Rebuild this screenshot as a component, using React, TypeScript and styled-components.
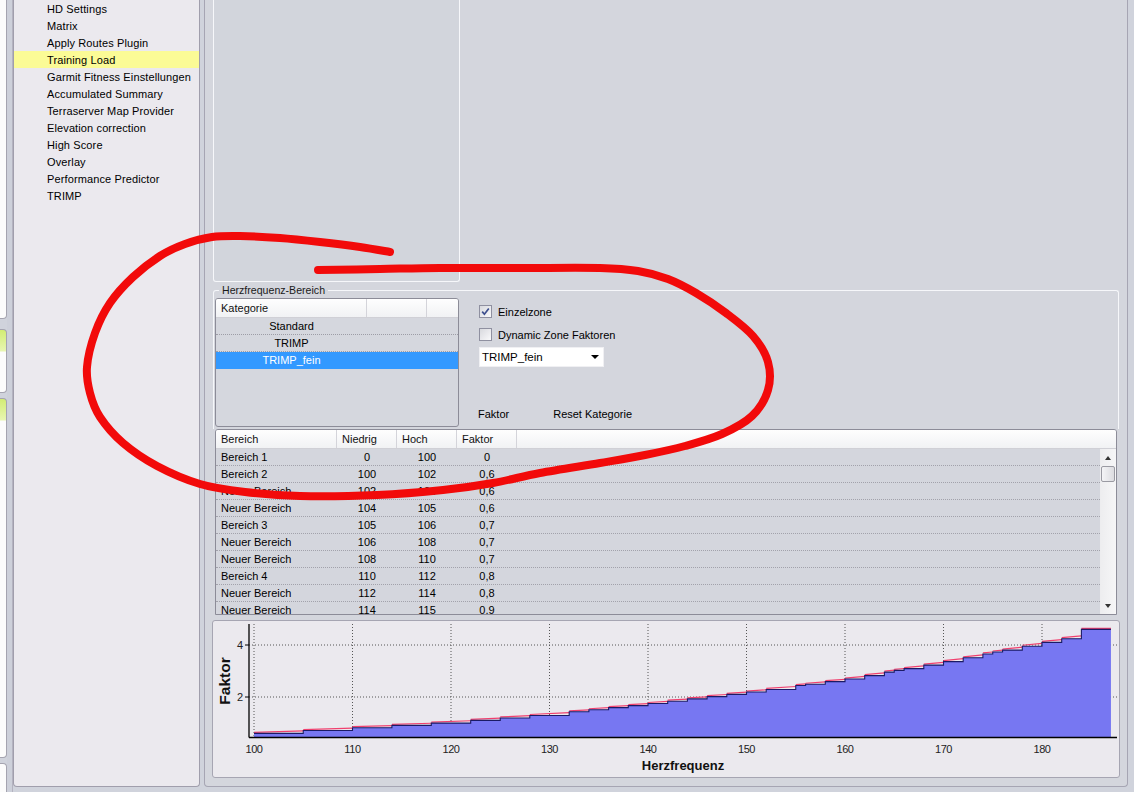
import React from 'react';
import styled, { createGlobalStyle } from 'styled-components';

const Global = createGlobalStyle`
  html, body { margin: 0; padding: 0; background: #d0d3dc; }
  body { font-family: "Liberation Sans", Arial, sans-serif; font-size: 11px; color: #000; }
  #root { width: 1134px; height: 792px; overflow: hidden; }
  * { box-sizing: border-box; }
`;

const Screen = styled.div`
  position: relative;
  width: 1134px;
  height: 792px;
  display: flex;
  align-items: flex-start;
  overflow: hidden;
  background: #d0d3dc;
`;

const LeftStrip = styled.div`
  width: 7px;
  flex: none;
  height: 792px;
  display: flex;
  flex-direction: column;
`;

const StripPanel = styled.div<{ $h: number; $mt: number; $green?: boolean }>`
  flex: none;
  height: ${p => p.$h}px;
  margin-top: ${p => p.$mt}px;
  background: ${p =>
    p.$green ? 'linear-gradient(#d2ec74 0px, #e8f6b2 21px, #fcfcfc 22px)' : '#fcfcfc'};
  border: 1px solid #a5a4b0;
  border-left: none;
  border-radius: 0 4px 4px 0;
`;

const Gutter = styled.div`
  width: 6px;
  flex: none;
  height: 792px;
  background: #cdd0da;
  border-right: 1px solid #b4b3c0;
`;

const Sidebar = styled.div`
  width: 187px;
  flex: none;
  height: 787px;
  background: #ebe9ee;
  border: 1px solid #a09eac;
  border-top: none;
  border-radius: 0 0 4px 4px;
  display: flex;
  flex-direction: column;
`;

const SideItem = styled.div<{ $active?: boolean }>`
  height: 17px;
  line-height: 18px;
  padding-left: 33px;
  white-space: nowrap;
  letter-spacing: 0.12px;
  background: ${p => (p.$active ? '#fbfb96' : 'transparent')};
`;

const Spacer = styled.div`
  width: 4px;
  flex: none;
`;

const Main = styled.div`
  width: 924px;
  flex: none;
  height: 787px;
  background: #d4d6dd;
  border: 1px solid #a6a5b3;
  border-top: none;
  border-radius: 0 0 4px 4px;
  display: flex;
  flex-direction: column;
`;

const TopRect = styled.div`
  margin-left: 8px;
  width: 247px;
  height: 282px;
  flex: none;
  background: #d2d5dc;
  border: 1px solid #f6f7fa;
  border-top: none;
  border-radius: 0 0 3px 3px;
`;

const Group = styled.div`
  position: relative;
  margin-top: 8px;
  margin-left: 8px;
  width: 906px;
  height: 139px;
  flex: none;
  border: 1px solid #f6f7fa;
  border-bottom: none;
  border-radius: 3px 3px 0 0;
  display: flex;
  padding: 7px 0 0 1px;
`;

const Legend = styled.span`
  position: absolute;
  top: -8px;
  left: 5px;
  padding: 0 3px;
  background: #d4d6dd;
  line-height: 14px;
  font-size: 10.6px;
  color: #1a1a1a;
`;

const KatList = styled.div`
  width: 244px;
  height: 129px;
  flex: none;
  border: 1px solid #8c8c98;
  border-radius: 3px;
  background: #d5d7de;
  overflow: hidden;
  display: flex;
  flex-direction: column;
`;

const HeadRow = styled.div`
  display: flex;
  height: 19px;
  flex: none;
  background: linear-gradient(#fefefe, #f1f2f4);
  border-bottom: 1px solid #d0d0d6;
`;

const HeadCell = styled.div<{ $w?: number }>`
  ${p => (p.$w ? `width: ${p.$w}px; flex: none;` : 'flex: 1;')}
  height: 18px;
  line-height: 18px;
  padding-left: 5px;
  border-right: 1px solid #d4d4da;
  white-space: nowrap;
  color: #111;
  &:last-child { border-right: none; }
`;

const KatRow = styled.div<{ $sel?: boolean }>`
  height: 17px;
  flex: none;
  display: flex;
  background: ${p => (p.$sel ? '#3399ff' : 'transparent')};
  color: ${p => (p.$sel ? '#fff' : '#000')};
  border-bottom: 1px dotted ${p => (p.$sel ? '#3399ff' : '#9d9da6')};
`;

const KatCell = styled.div`
  width: 151px;
  flex: none;
  text-align: center;
  line-height: 17px;
  white-space: nowrap;
`;

const Controls = styled.div`
  margin-left: 20px;
  display: flex;
  flex-direction: column;
  align-items: flex-start;
`;

const CheckRow = styled.div<{ $mt: number }>`
  display: flex;
  align-items: center;
  gap: 6px;
  height: 13px;
  margin-top: ${p => p.$mt}px;
  white-space: nowrap;
  line-height: 12px;
`;

const Box = styled.div`
  width: 13px;
  height: 13px;
  flex: none;
  border: 1px solid #8f90a0;
  background: linear-gradient(135deg, #d8d9de, #f9f9fb);
  display: flex;
  align-items: center;
  justify-content: center;
`;

const Combo = styled.div`
  margin-top: 6px;
  width: 125px;
  height: 20px;
  background: #fff;
  border: 1px solid #f0f0f3;
  display: flex;
  align-items: center;
  justify-content: space-between;
  padding: 0 4px 0 2px;
  font-size: 11.5px;
`;

const Arrow = styled.span`
  width: 0;
  height: 0;
  border-left: 4px solid transparent;
  border-right: 4px solid transparent;
  border-top: 4px solid #000;
`;

const LinkRow = styled.div`
  margin-top: 40px;
  margin-left: -1px;
  display: flex;
  gap: 44px;
  line-height: 14px;
  white-space: nowrap;
`;

const Table = styled.div`
  margin-left: 10px;
  width: 902px;
  height: 186px;
  flex: none;
  border: 1px solid #8c8c98;
  border-radius: 3px 3px 0 0;
  display: flex;
  flex-direction: column;
  overflow: hidden;
`;

const TBody = styled.div`
  flex: 1;
  display: flex;
  overflow: hidden;
`;

const Rows = styled.div`
  flex: 1;
  overflow: hidden;
`;

const TRow = styled.div`
  height: 17px;
  display: flex;
  border-bottom: 1px dotted #a2a2ab;
`;

const TCell = styled.div<{ $w: number; $center?: boolean }>`
  width: ${p => p.$w}px;
  flex: none;
  line-height: 17px;
  white-space: nowrap;
  ${p => (p.$center ? 'text-align: center;' : 'padding-left: 5px;')}
`;

const ScrollBar = styled.div`
  width: 16px;
  flex: none;
  background: linear-gradient(90deg, #ededef, #f6f6f7);
  display: flex;
  flex-direction: column;
  align-items: center;
`;

const ScrollArrow = styled.div<{ $up?: boolean }>`
  height: 17px;
  width: 16px;
  display: flex;
  align-items: center;
  justify-content: center;
  &::after {
    content: '';
    border-left: 3.5px solid transparent;
    border-right: 3.5px solid transparent;
    ${p => (p.$up ? 'border-bottom: 4px solid #333;' : 'border-top: 4px solid #333;')}
  }
`;

const Thumb = styled.div`
  width: 14px;
  height: 16px;
  border: 1px solid #9a9aa2;
  border-radius: 2px;
  background: linear-gradient(90deg, #f4f4f6, #dcdce0);
`;

const ScrollFill = styled.div`
  flex: 1;
`;

const ChartPanel = styled.div`
  margin-top: 5px;
  margin-left: 7px;
  width: 908px;
  height: 158px;
  flex: none;
  background: #ebe9ee;
  border: 1px solid #a6a5b2;
  border-radius: 3px;
  overflow: hidden;
`;

const Overlay = styled.svg`
  position: absolute;
  left: 0;
  top: 0;
  pointer-events: none;
`;

const sideItems = [
  'HD Settings',
  'Matrix',
  'Apply Routes Plugin',
  'Training Load',
  'Garmit Fitness Einstellungen',
  'Accumulated Summary',
  'Terraserver Map Provider',
  'Elevation correction',
  'High Score',
  'Overlay',
  'Performance Predictor',
  'TRIMP',
];

const rows: [string, string, string, string][] = [
  ['Bereich 1', '0', '100', '0'],
  ['Bereich 2', '100', '102', '0,6'],
  ['Neuer Bereich', '102', '104', '0,6'],
  ['Neuer Bereich', '104', '105', '0,6'],
  ['Bereich 3', '105', '106', '0,7'],
  ['Neuer Bereich', '106', '108', '0,7'],
  ['Neuer Bereich', '108', '110', '0,7'],
  ['Bereich 4', '110', '112', '0,8'],
  ['Neuer Bereich', '112', '114', '0,8'],
  ['Neuer Bereich', '114', '115', '0,9'],
  ['Neuer Bereich', '115', '118', '0,9'],
];

const anchors: [number, number][] = [
  [100, 0.6], [110, 0.82], [120, 1.04], [130, 1.35], [140, 1.75],
  [150, 2.19], [160, 2.69], [170, 3.36], [180, 4.1], [187, 4.6],
];
const interp = (hr: number) => {
  for (let i = 0; i < anchors.length - 1; i++) {
    const [a, va] = anchors[i];
    const [b, vb] = anchors[i + 1];
    if (hr >= a && hr <= b) return va + ((vb - va) * (hr - a)) / (b - a);
  }
  return anchors[anchors.length - 1][1];
};
const bounds = [100, 105, 110, 114, 118, 122, 125, 128, 132, 134, 136, 138, 140, 142, 144, 146, 148, 150,
  152, 155, 156, 158, 160, 162, 164, 165, 166, 168, 170, 172, 174, 175, 176, 178, 180, 182, 184, 187];

const X = (hr: number) => 41 + (hr - 100) * 9.85;
const Y = (v: number) => 128 - 26 * v;

const Chart: React.FC = () => {
  let step = '';
  let red = '';
  for (let i = 0; i < bounds.length - 1; i++) {
    const v = i === bounds.length - 2 ? 4.6 : interp(bounds[i]);
    const x0 = X(bounds[i]);
    const x1 = X(bounds[i + 1]);
    step += `${i === 0 ? 'M' : 'L'} ${x0} ${Y(v)} L ${x1} ${Y(v)} `;
    const vn = i === bounds.length - 2 ? v : interp(bounds[i + 1]);
    red += `M ${x0} ${Y(v) - 1} L ${x1} ${Y(v + (vn - v) * 0.5) - 1} `;
  }
  const fill = `${step} L ${X(187)} 116 L ${X(100)} 116 Z`;
  const ticks = [100, 110, 120, 130, 140, 150, 160, 170, 180];
  return (
    <svg width={906} height={156} style={{ display: 'block' }}>
      {ticks.map(t => (
        <line key={t} x1={X(t)} y1={3} x2={X(t)} y2={116} stroke="#555" strokeDasharray="1 2" strokeWidth={1} />
      ))}
      {[2, 4].map(v => (
        <line key={v} x1={36} y1={Y(v)} x2={904} y2={Y(v)} stroke="#555" strokeDasharray="1 2" strokeWidth={1} />
      ))}
      <path d={fill} fill="#7777f2" />
      <path d={red} fill="none" stroke="#f0406e" strokeWidth={1.2} />
      <path d={step} fill="none" stroke="#1b1b66" strokeWidth={1.1} />
      <line x1={36} y1={3} x2={36} y2={116.5} stroke="#000" strokeWidth={1.3} />
      <line x1={36} y1={116.5} x2={904} y2={116.5} stroke="#000" strokeWidth={1.3} />
      {[2, 4].map(v => (
        <g key={v}>
          <line x1={32} y1={Y(v)} x2={36} y2={Y(v)} stroke="#000" />
          <text x={30} y={Y(v) + 4} fontSize={11} textAnchor="end" fill="#222" fontFamily="Liberation Sans, Arial, sans-serif">{v}</text>
        </g>
      ))}
      {ticks.map(t => (
        <text key={t} x={X(t)} y={132} fontSize={11} letterSpacing={-0.4} textAnchor="middle" fill="#222" fontFamily="Liberation Sans, Arial, sans-serif">{t}</text>
      ))}
      <text x={470} y={149} fontSize={13} fontWeight="bold" textAnchor="middle" fill="#111" fontFamily="Liberation Sans, Arial, sans-serif">Herzfrequenz</text>
      <text transform="translate(17 60) rotate(-90)" fontSize={15.5} fontWeight="bold" textAnchor="middle" fill="#111" fontFamily="Liberation Sans, Arial, sans-serif">Faktor</text>
    </svg>
  );
};

const loop: [number, number][] = [
  [390, 252], [360, 247], [320, 242], [280, 238], [240, 236], [212, 237], [185, 244], [160, 256],
  [133, 277], [110, 303], [95, 333], [87, 367], [90, 393], [100, 417], [123, 443], [157, 466],
  [200, 484], [245, 492], [300, 496], [377, 495], [443, 490], [493, 483], [540, 473], [600, 463],
  [645, 455], [685, 446], [722, 434], [752, 416], [768, 390], [768, 362], [753, 336], [726, 313],
  [696, 293], [668, 279], [638, 271], [600, 268], [520, 268], [440, 268], [380, 269], [318, 270],
];
const smooth = (p: [number, number][]) => {
  let d = `M ${p[0][0]} ${p[0][1]}`;
  for (let i = 0; i < p.length - 1; i++) {
    const p0 = p[i - 1] || p[i];
    const p1 = p[i];
    const p2 = p[i + 1];
    const p3 = p[i + 2] || p2;
    const c1x = p1[0] + (p2[0] - p0[0]) / 6;
    const c1y = p1[1] + (p2[1] - p0[1]) / 6;
    const c2x = p2[0] - (p3[0] - p1[0]) / 6;
    const c2y = p2[1] - (p3[1] - p1[1]) / 6;
    d += ` C ${c1x} ${c1y} ${c2x} ${c2y} ${p2[0]} ${p2[1]}`;
  }
  return d;
};

const Check = () => (
  <svg width="9" height="9" viewBox="0 0 9 9">
    <path d="M1.2 4.6 L3.4 7.2 L7.8 1.4" fill="none" stroke="#3d4f8e" strokeWidth="1.7" />
  </svg>
);

export default function App() {
  return (
    <>
      <Global />
      <Screen>
        <LeftStrip>
          <StripPanel $mt={-10} $h={329} />
          <StripPanel $mt={10} $h={64} $green />
          <StripPanel $mt={5} $h={360} $green />
          <StripPanel $mt={5} $h={40} />
        </LeftStrip>
        <Gutter />
        <Sidebar>
          {sideItems.map(s => (
            <SideItem key={s} $active={s === 'Training Load'}>{s}</SideItem>
          ))}
        </Sidebar>
        <Spacer />
        <Main>
          <TopRect />
          <Group>
            <Legend>Herzfrequenz-Bereich</Legend>
            <KatList>
              <HeadRow>
                <HeadCell $w={151}>Kategorie</HeadCell>
                <HeadCell $w={60} />
                <HeadCell />
              </HeadRow>
              <KatRow><KatCell>Standard</KatCell></KatRow>
              <KatRow><KatCell>TRIMP</KatCell></KatRow>
              <KatRow $sel><KatCell>TRIMP_fein</KatCell></KatRow>
            </KatList>
            <Controls>
              <CheckRow $mt={7}>
                <Box><Check /></Box>
                <span>Einzelzone</span>
              </CheckRow>
              <CheckRow $mt={10}>
                <Box />
                <span>Dynamic Zone Faktoren</span>
              </CheckRow>
              <Combo>
                <span>TRIMP_fein</span>
                <Arrow />
              </Combo>
              <LinkRow>
                <span>Faktor</span>
                <span>Reset Kategorie</span>
              </LinkRow>
            </Controls>
          </Group>
          <Table>
            <HeadRow>
              <HeadCell $w={121}>Bereich</HeadCell>
              <HeadCell $w={60}>Niedrig</HeadCell>
              <HeadCell $w={60}>Hoch</HeadCell>
              <HeadCell $w={60}>Faktor</HeadCell>
              <HeadCell />
            </HeadRow>
            <TBody>
              <Rows>
                {rows.map((r, i) => (
                  <TRow key={i}>
                    <TCell $w={121}>{r[0]}</TCell>
                    <TCell $w={60} $center>{r[1]}</TCell>
                    <TCell $w={60} $center>{r[2]}</TCell>
                    <TCell $w={60} $center>{r[3]}</TCell>
                  </TRow>
                ))}
              </Rows>
              <ScrollBar>
                <ScrollArrow $up />
                <Thumb />
                <ScrollFill />
                <ScrollArrow />
              </ScrollBar>
            </TBody>
          </Table>
          <ChartPanel>
            <Chart />
          </ChartPanel>
        </Main>
        <Overlay width={1134} height={792}>
          <path d={smooth(loop)} fill="none" stroke="#f20a0a" strokeWidth={8} strokeLinecap="round" strokeLinejoin="round" />
        </Overlay>
      </Screen>
    </>
  );
}
